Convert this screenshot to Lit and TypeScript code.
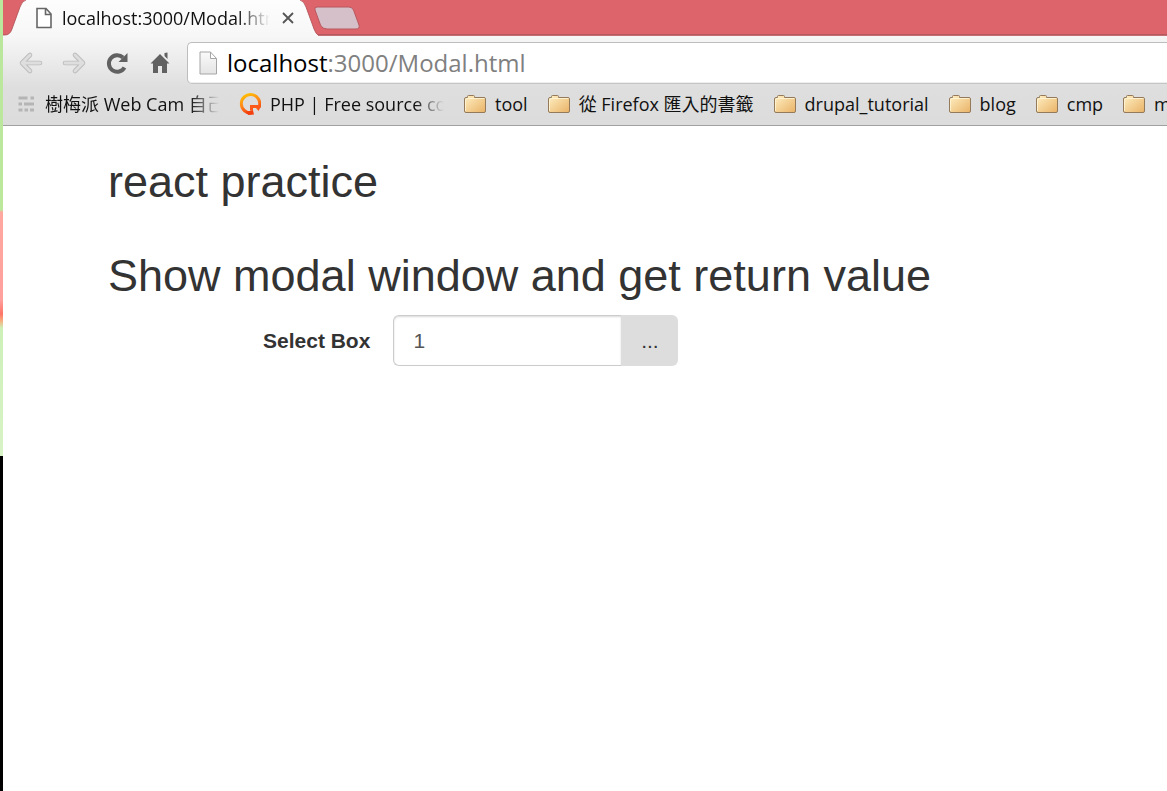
import { LitElement, html, css, svg } from "lit";
import { customElement, property, state } from "lit/decorators.js";

interface Bookmark {
  icon: "stack" | "spiral" | "folder";
  label: string;
  clipped?: boolean;
}

const BOOKMARKS: Bookmark[] = [
  { icon: "stack", label: "樹梅派 Web Cam 自己", clipped: true },
  { icon: "spiral", label: "PHP | Free source coc", clipped: true },
  { icon: "folder", label: "tool" },
  { icon: "folder", label: "從 Firefox 匯入的書籤" },
  { icon: "folder", label: "drupal_tutorial" },
  { icon: "folder", label: "blog" },
  { icon: "folder", label: "cmp" },
  { icon: "folder", label: "m" },
];

const folderIcon = svg`
  <defs>
    <linearGradient id="fold" x1="0" y1="0" x2="1" y2="1">
      <stop offset="0" stop-color="#fff0c4" />
      <stop offset="1" stop-color="#e9b266" />
    </linearGradient>
  </defs>
  <path d="M3.5 4.5V3.5Q3.5 2.5 4.500 2.500H9.500Q10.500 2.500 10.500 3.500V4.500H20Q21.500 4.500 21.500 6V18Q21.500 19.500 20 19.500H2Q.5 19.500 .5 18V6Q.5 4.500 2 4.500Z" fill="url(#fold)" stroke="#94795a" />
  <path d="M1.500 18V7Q1.500 5.500 3 5.500H20.500" fill="none" stroke="#fff6d8" stroke-opacity=".8" />`;

const spiralIcon = svg`
  <defs>
    <linearGradient id="sun" x1="0" y1="0" x2="0.4" y2="1">
      <stop offset="0" stop-color="#ffc400" />
      <stop offset="0.55" stop-color="#ff8a1c" />
      <stop offset="1" stop-color="#f4400f" />
    </linearGradient>
  </defs>
  <path d="M13 19.800A9.200 9.200 0 1 1 20.300 13.500H12.500V17.500" fill="none" stroke="url(#sun)" stroke-width="3" />
  <path d="M11 12H22Q21.500 15 19.500 18L17 15L14 15V18L11 17Z" fill="#fb5a18" />
  <path d="M8 18.500L14 17.500L15 21.500L9 22Z" fill="#f4400f" />`;

const stackIcon = svg`
  <g fill="#b5b5b5">
    <path d="M.5 3.500h9v3h-9zM12.500 3.500h3.500v3h-3.500zM.5 9.500h3.500v3h-3.500zM6 9.500h10v3h-10zM.5 15.500h4v3h-4zM6.500 15.500h3.500v3h-3.500zM12 15.500h4v3h-4z" />
  </g>`;

@customElement("bookmark-link")
export class BookmarkLink extends LitElement {
  @property({ attribute: false }) bookmark!: Bookmark;

  static styles = css`
    :host {
      display: block;
      flex: none;
    }
    .link {
      display: flex;
      align-items: center;
      gap: 9px;
      color: #111;
      text-decoration: none;
      white-space: nowrap;
      line-height: 26px;
    }
    .icon {
      flex: none;
      width: 22px;
      height: 22px;
    }
    .icon.stack {
      width: 18px;
    }
    .clipped {
      width: 174px;
      overflow: hidden;
      -webkit-mask-image: linear-gradient(to right, #000 145px, transparent);
      mask-image: linear-gradient(to right, #000 145px, transparent);
    }
  `;

  render() {
    const { icon, label, clipped } = this.bookmark;
    const art = icon === "folder" ? folderIcon : icon === "spiral" ? spiralIcon : stackIcon;
    return html`<a class="link" href="#">
      <svg class="icon ${icon}" viewBox="0 0 ${icon === "stack" ? 18 : 22} 22" aria-hidden="true">${art}</svg>
      <span class=${clipped ? "clipped" : ""}>${label}</span>
    </a>`;
  }
}

@customElement("browser-chrome")
export class BrowserChrome extends LitElement {
  static styles = css`
    :host {
      display: block;
      font-family: "Open Sans", "Noto Sans CJK TC", sans-serif;
      font-size: 18px;
    }
    .chrome {
      background: linear-gradient(#fdfdfd, #f7f7f7 36px, #dedede 88px, #dcdcdc);
      border-bottom: 1px solid #a0a0a0;
      overflow: hidden;
    }
    .strip {
      display: grid;
      grid-template-columns: 315px 1fr;
      height: 36px;
    }
    .tab,
    .rest {
      display: grid;
      grid-template-columns: minmax(0, 1fr);
    }
    .tab > *,
    .rest > * {
      grid-area: 1 / 1;
    }
    .shape {
      display: block;
      height: 36px;
    }
    .rest {
      background: linear-gradient(#dd646b 34px, #b14d53 34px, #c97b80);
    }
    .tab-row {
      display: flex;
      align-items: center;
      height: 35px;
      padding: 0 24px 0 33px;
      gap: 10px;
    }
    .title {
      flex: 1;
      min-width: 0;
      overflow: hidden;
      white-space: nowrap;
      color: #111;
      -webkit-mask-image: linear-gradient(to right, #000 175px, transparent 208px);
      mask-image: linear-gradient(to right, #000 175px, transparent 208px);
    }
    .tab-row svg {
      flex: none;
    }
    button {
      display: flex;
      padding: 0;
      border: 0;
      background: none;
    }
    .new-tab {
      align-self: center;
      justify-self: start;
      margin-left: -4px;
    }
    .toolbar {
      display: flex;
      align-items: center;
      padding: 6px 0 0 15px;
      height: 42px;
    }
    .nav {
      display: flex;
      gap: 17px;
      margin-right: 14px;
    }
    .omnibox {
      flex: 1;
      display: flex;
      align-items: center;
      gap: 9px;
      box-sizing: border-box;
      height: 42px;
      padding-left: 11px;
      border: 1px solid #bdbdbd;
      border-right: 0;
      border-bottom-color: #c4c4c4;
      border-radius: 5px 0 0 5px;
      background: #fff;
      box-shadow: inset 0 -1px #eee;
    }
    .url {
      font-size: 24px;
      line-height: 32px;
      color: #808080;
      white-space: nowrap;
    }
    .host {
      color: #000;
    }
    .bookmarks {
      display: flex;
      align-items: center;
      gap: 20px;
      box-sizing: border-box;
      height: 41px;
      padding: 0 0 2px 15px;
    }
  `;

  render() {
    return html`<header class="chrome">
      <div class="strip">
        <div class="tab">
          <svg class="shape" viewBox="0 0 315 36" width="315" aria-hidden="true">
            <path d="M0 0H23Q19 1 17 7L9 29Q7 35 2 35H0Z" fill="#dd646b" />
            <path d="M23 0Q19 1 17 7L9 29Q7 35 2 35H0" fill="none" stroke="#a9494f" stroke-opacity=".75" />
            <path d="M297 0Q301 1 303 7L311 29Q313 34 315 35V0Z" fill="#dd646b" />
            <path d="M297 0Q301 1 303 7L311 29Q313 34 315 35" fill="none" stroke="#a9494f" stroke-opacity=".75" />
          </svg>
          <div class="tab-row">
            <svg width="16" height="22" viewBox="0 0 16 22" aria-hidden="true">
              <path d="M1 1.500H10L15 7V20.500H1ZM9.500 1.500V7.500H15" fill="#fff" stroke="#666" stroke-width="1.600" />
            </svg>
            <span class="title">localhost:3000/Modal.html</span>
            <button aria-label="Close tab">
              <svg width="12" height="12" viewBox="0 0 12 12"><path d="M1 1L11 11M11 1L1 11" stroke="#555" stroke-width="1.800" /></svg>
            </button>
          </div>
        </div>
        <div class="rest">
          <button class="new-tab" aria-label="New tab">
            <svg width="46" height="24" viewBox="0 0 46 24">
              <path d="M3 1H35Q38 1 39.500 4L45 19Q46 23 42 23H13Q8 23 6.500 19L1 4Q0 1 3 1Z" fill="#d5bfc8" stroke="#b9575e" />
            </svg>
          </button>
        </div>
      </div>
      <nav class="toolbar">
        <div class="nav">
          <button aria-label="Back">
            <svg width="26" height="26" viewBox="0 0 26 26"><path d="M12 5L4 13L12 21M5 13H22" fill="none" stroke="#bcbcbc" stroke-width="4.600" stroke-linejoin="round" stroke-linecap="round" /><path d="M12 5L4 13L12 21M5 13H22" fill="none" stroke="#dedede" stroke-width="2.800" stroke-linejoin="round" stroke-linecap="round" /></svg>
          </button>
          <button aria-label="Forward">
            <svg width="26" height="26" viewBox="0 0 26 26"><path d="M14 5L22 13L14 21M21 13H4" fill="none" stroke="#bcbcbc" stroke-width="4.600" stroke-linejoin="round" stroke-linecap="round" /><path d="M14 5L22 13L14 21M21 13H4" fill="none" stroke="#dedede" stroke-width="2.800" stroke-linejoin="round" stroke-linecap="round" /></svg>
          </button>
          <button aria-label="Reload">
            <svg width="26" height="26" viewBox="0 0 26 26"><path d="M20.500 17.500A8.300 8.300 0 1 1 19 7.500" fill="none" stroke="#616161" stroke-width="4" /><path d="M23.500 3V12H14.500Z" fill="#616161" /></svg>
          </button>
          <button aria-label="Home">
            <svg width="26" height="26" viewBox="0 0 26 26"><path d="M13 4L22.500 13.500H20V23H15V16H11V23H6V13.500H3.500ZM17.500 3L20.500 2.500V9L17.500 6Z" fill="#616161" /></svg>
          </button>
        </div>
        <div class="omnibox">
          <svg width="19" height="24" viewBox="0 0 19 24" aria-hidden="true">
            <defs><linearGradient id="page" x1="0" y1="0" x2="0" y2="1"><stop stop-color="#fafafa" /><stop offset="1" stop-color="#e4e4e4" /></linearGradient></defs>
            <path d="M1 1H11.500L17.500 7.500V23H1ZM11.500 1V7.500H17.500" fill="url(#page)" stroke="#a5a5a5" />
          </svg>
          <span class="url"><span class="host">localhost</span>:3000/Modal.html</span>
        </div>
      </nav>
      <nav class="bookmarks">
        ${BOOKMARKS.map((b) => html`<bookmark-link .bookmark=${b}></bookmark-link>`)}
      </nav>
    </header>`;
  }
}

@customElement("app-root")
export class AppRoot extends LitElement {
  @state() private value = "1";

  static styles = css`
    :host {
      display: grid;
      grid-template-columns: 3px minmax(0, 1fr);
      min-height: 100vh;
      background: #fff;
    }
    .desktop {
      background: linear-gradient(
        #b9e79c 0,
        #bce89c 210px,
        #ffa8a0 212px,
        #ffa09c 300px,
        #ff7468 314px,
        #f8b080 321px,
        #cdf0b8 328px,
        #d8f3c6 456px,
        #000 456px
      );
    }
    .page {
      padding: 31px 105px;
      font-family: "Liberation Sans", Arial, sans-serif;
      font-size: 21px;
      line-height: 30px;
      color: #333;
    }
    .heading {
      margin: 0 0 44px;
      font-size: 45px;
      line-height: 50px;
      font-weight: 400;
    }
    .heading.sub {
      margin-bottom: 14px;
    }
    .form {
      display: flex;
      align-items: center;
      gap: 23px;
      padding-left: 155px;
    }
    .label {
      font-weight: 700;
    }
    .group {
      display: flex;
      height: 51px;
    }
    .field {
      box-sizing: border-box;
      width: 228px;
      padding: 0 19px;
      border: 1px solid #ccc;
      border-right: 0;
      border-radius: 6px 0 0 6px;
      box-shadow: inset 0 1px 2px rgba(0, 0, 0, 0.15);
      background: #fff;
      color: #555;
      font: inherit;
      outline: 0;
    }
    .more {
      width: 57px;
      padding: 0;
      border: 0;
      border-radius: 0 6px 6px 0;
      background: #ddd;
      color: #333;
      font: inherit;
    }
  `;

  private onInput(e: Event) {
    this.value = (e.target as HTMLInputElement).value;
  }

  render() {
    return html`
      <div class="desktop"></div>
      <div>
        <browser-chrome></browser-chrome>
        <main class="page">
          <h2 class="heading">react practice</h2>
          <h2 class="heading sub">Show modal window and get return value</h2>
          <form class="form">
            <label class="label" for="select-box">Select Box</label>
            <div class="group">
              <input class="field" id="select-box" type="text" .value=${this.value} @input=${this.onInput} />
              <button class="more" type="button">...</button>
            </div>
          </form>
        </main>
      </div>
    `;
  }
}
